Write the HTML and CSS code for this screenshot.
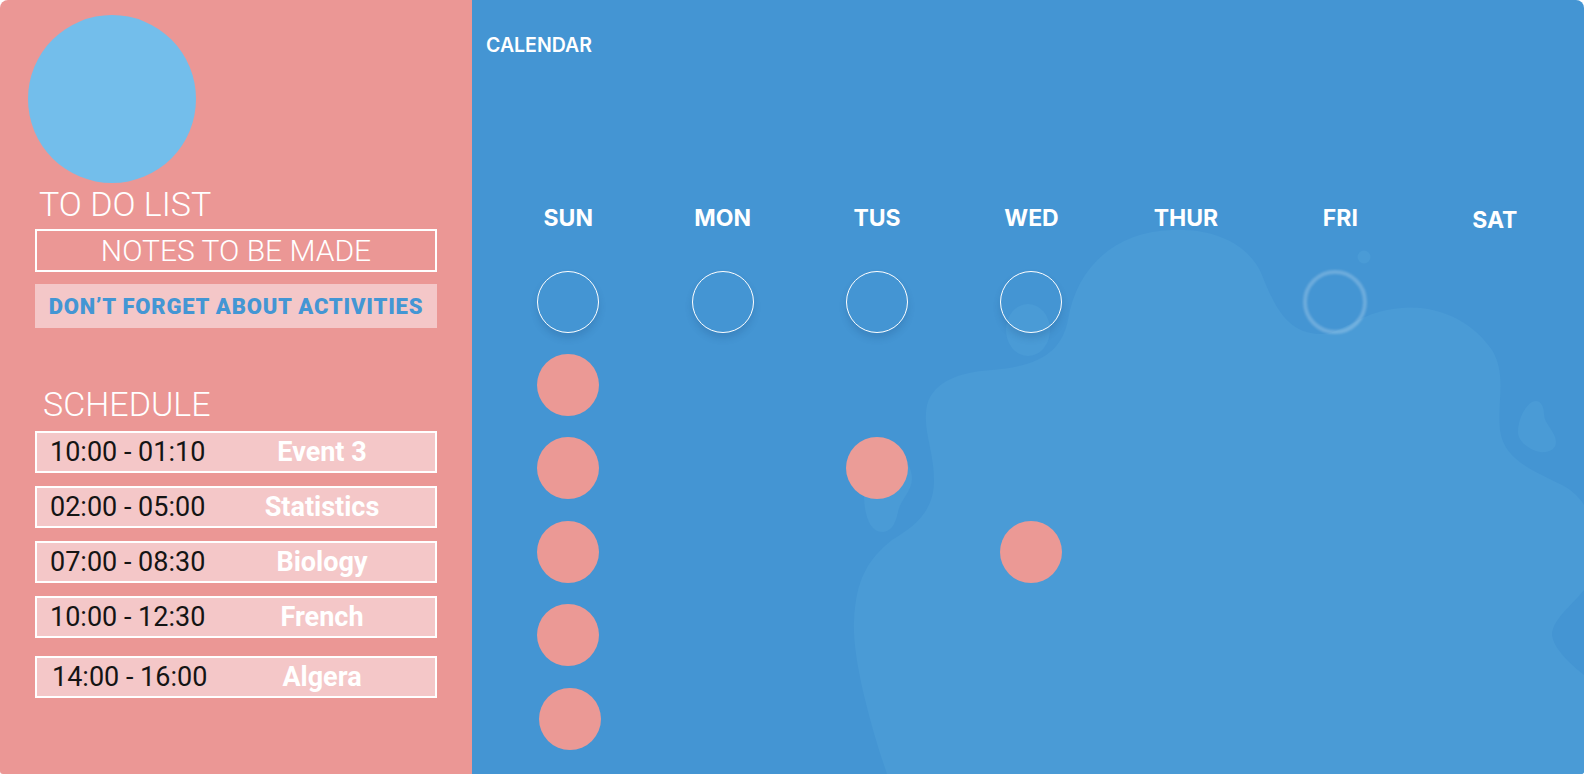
FILE: index.html
```html
<!DOCTYPE html>
<html lang="en">
<head>
<meta charset="utf-8">
<title>Planner</title>
<link rel="stylesheet" href="styles.css">
</head>
<body>
<div class="app">
  <aside class="sidebar">
    <div class="avatar"></div>
    <h2 class="heading">TO DO LIST</h2>
    <div class="note-box">NOTES TO BE MADE</div>
    <div class="reminder">DON’T FORGET ABOUT ACTIVITIES</div>
    <h2 class="heading schedule-heading">SCHEDULE</h2>
    <ul class="schedule">
      <li class="slot"><span class="time">10:00 - 01:10</span><span class="event">Event 3</span></li>
      <li class="slot"><span class="time">02:00 - 05:00</span><span class="event">Statistics</span></li>
      <li class="slot"><span class="time">07:00 - 08:30</span><span class="event">Biology</span></li>
      <li class="slot"><span class="time">10:00 - 12:30</span><span class="event">French</span></li>
      <li class="slot slot-last"><span class="time">14:00 - 16:00</span><span class="event">Algera</span></li>
    </ul>
  </aside>
  <main class="calendar">
    <svg class="backdrop" viewBox="0 0 1112 774" preserveAspectRatio="none" aria-hidden="true">
      <path class="blob" d="M415,774 C400,730 380,660 382,621 C384,580 395,560 420,540 C445,525 462,510 462,480 C462,450 450,430 455,405 C462,380 490,372 520,370 C570,366 590,350 596,320 C604,270 640,232 700,230 C750,228 780,250 790,275 C802,305 815,335 850,334 C870,333 885,316 915,310 C960,300 1000,320 1020,350 C1035,375 1025,400 1028,430 C1032,460 1060,470 1090,485 C1100,490 1108,498 1112,505 L1112,590 C1100,605 1080,620 1080,635 C1082,650 1100,665 1112,675 L1112,774 Z"/>
      <ellipse class="blob" cx="556" cy="330" rx="22" ry="26"/>
      <path class="blob" d="M400,452 C420,446 440,460 440,478 C440,492 428,500 426,512 C423,526 418,532 410,532 C398,532 392,515 392,495 C392,475 392,456 400,452 Z"/>
      <path class="blob" d="M1060,402 C1068,398 1072,406 1072,414 C1072,424 1084,432 1084,442 C1084,450 1076,453 1068,452 C1058,450 1046,442 1046,432 C1046,420 1052,407 1060,402 Z"/>
      <circle class="blob" cx="892" cy="257" r="6.5"/>
    </svg>
    <h1 class="cal-title">CALENDAR</h1>
    <div class="days">
      <span class="day">SUN</span>
      <span class="day">MON</span>
      <span class="day">TUS</span>
      <span class="day">WED</span>
      <span class="day">THUR</span>
      <span class="day">FRI</span>
      <span class="day day-low">SAT</span>
    </div>
    <div class="board">
      <div class="cell"><span class="ring"></span></div>
      <div class="cell"><span class="ring"></span></div>
      <div class="cell"><span class="ring"></span></div>
      <div class="cell"><span class="ring"></span></div>
      <div class="cell"></div>
      <div class="cell"><span class="ring ring-faint"></span></div>
      <div class="cell"></div>

      <div class="cell"><span class="dot"></span></div>
      <div class="cell"></div><div class="cell"></div><div class="cell"></div><div class="cell"></div><div class="cell"></div><div class="cell"></div>

      <div class="cell"><span class="dot"></span></div>
      <div class="cell"></div>
      <div class="cell"><span class="dot dot-soft"></span></div>
      <div class="cell"></div><div class="cell"></div><div class="cell"></div><div class="cell"></div>

      <div class="cell"><span class="dot"></span></div>
      <div class="cell"></div><div class="cell"></div>
      <div class="cell"><span class="dot"></span></div>
      <div class="cell"></div><div class="cell"></div><div class="cell"></div>

      <div class="cell"><span class="dot"></span></div>
      <div class="cell"></div><div class="cell"></div><div class="cell"></div><div class="cell"></div><div class="cell"></div><div class="cell"></div>

      <div class="cell"><span class="dot dot-shift"></span></div>
      <div class="cell"></div><div class="cell"></div><div class="cell"></div><div class="cell"></div><div class="cell"></div><div class="cell"></div>
    </div>
  </main>
</div>
</body>
</html>
```

FILE: styles.css
```css
html, body {
  margin: 0;
  padding: 0;
  background: #ffffff;
}

.app {
  display: flex;
  width: 1584px;
  height: 774px;
  border-radius: 8px 8px 3px 3px;
  overflow: hidden;
}

/* ---------- Sidebar ---------- */
.sidebar {
  width: 472px;
  flex: none;
  box-sizing: border-box;
  padding-top: 15px;
  background: #eb9795;
  font-family: Roboto, "Liberation Sans", sans-serif;
}

.avatar {
  width: 168px;
  height: 168px;
  margin-left: 28px;
  border-radius: 50%;
  background: #73beeb;
}

.heading {
  margin: 3px 0 0 39px;
  font-size: 34px;
  font-weight: 300;
  line-height: 36px;
  color: #ffffff;
}

.note-box {
  box-sizing: border-box;
  width: 402px;
  height: 43px;
  margin: 7px 0 0 35px;
  border: 2px solid #ffffff;
  font-size: 30px;
  font-weight: 300;
  line-height: 39px;
  text-align: center;
  color: #ffffff;
}

.reminder {
  width: 402px;
  height: 44px;
  margin: 12px 0 0 35px;
  background: #f4c7c8;
  color: #4396d4;
  font-size: 22px;
  font-weight: 900;
  line-height: 45px;
  letter-spacing: 0.8px;
  text-align: center;
}

.schedule-heading {
  margin: 58px 0 0 43px;
}

.schedule {
  display: flex;
  flex-direction: column;
  gap: 13px;
  width: 402px;
  margin: 9px 0 0 35px;
  padding: 0;
  list-style: none;
}

.slot {
  display: grid;
  grid-template-columns: 172px 1fr;
  align-items: center;
  box-sizing: border-box;
  height: 42px;
  border: 2px solid #ffffff;
  background: #f4c7c8;
}

.slot-last {
  margin-top: 5px;
}

.time {
  padding-left: 13px;
  font-size: 27px;
  font-weight: 400;
  color: #141414;
}

.slot-last .time {
  padding-left: 15px;
}

.event {
  text-align: center;
  font-size: 27px;
  font-weight: 700;
  color: #ffffff;
}

/* ---------- Calendar ---------- */
.calendar {
  position: relative;
  flex: 1;
  box-sizing: border-box;
  padding: 33px 12px 0 14px;
  background: #4495d3;
  font-family: Inter, "Open Sans", sans-serif;
  color: #ffffff;
}

.backdrop {
  position: absolute;
  left: 0;
  top: 0;
  width: 100%;
  height: 100%;
}

.blob {
  fill: #4a9bd6;
}

.cal-title,
.days,
.board {
  position: relative;
}

.cal-title {
  margin: 0;
  font-size: 19.5px;
  font-weight: 600;
  line-height: 24px;
}

.days {
  display: grid;
  grid-template-columns: repeat(7, 1fr);
  margin: 147px 0 0 5px;
}

.day {
  text-align: center;
  font-size: 23px;
  font-weight: 700;
  line-height: 28px;
}

.day-low {
  padding-top: 2px;
}

.board {
  display: grid;
  grid-template-columns: repeat(7, 1fr);
  grid-auto-rows: 83.4px;
  margin: 26px 0 0 5px;
}

.cell {
  display: flex;
  align-items: center;
  justify-content: center;
}

.ring {
  box-sizing: border-box;
  width: 62px;
  height: 62px;
  border: 1.6px solid #ffffff;
  border-radius: 50%;
  box-shadow: 0 5px 7px rgba(20, 60, 110, 0.18);
}

.ring-faint {
  width: 64px;
  height: 64px;
  margin-right: 10px;
  border: 4px solid rgba(255, 255, 255, 0.22);
  box-shadow: none;
  filter: blur(1.2px);
}

.dot {
  width: 62px;
  height: 62px;
  border-radius: 50%;
  background: #eb9995;
}

.dot-soft {
  background: #eb9c97;
}

.dot-shift {
  margin-left: 4px;
}
```
